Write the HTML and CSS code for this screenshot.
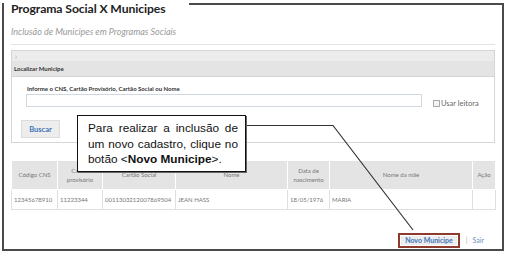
FILE: index.html
```html
<!DOCTYPE html>
<html lang="pt-BR">
<head>
  <meta charset="UTF-8" />
  <title>Programa Social X Municipes</title>
  <link rel="stylesheet" href="styles.css">
</head>
<body>

  <div class="frame">
    <h1 class="page-title">Programa Social X Municipes</h1>
    <p class="subtitle">Inclusão de Municipes em Programas Sociais</p>
    <hr class="divider">

    <div class="panel">
      <div class="panel-toggle">›</div>
      <div class="panel-head">Localizar Municipe</div>
      <div class="panel-body">
        <label class="field-label" for="busca">Informe o CNS, Cartão Provisório, Cartão Social ou Nome</label>
        <div class="search-row">
          <input type="text" id="busca" class="search-input" />
          <label class="reader"><span class="check"></span>Usar leitora</label>
        </div>
        <button class="btn btn-search">Buscar</button>
      </div>
    </div>

    <table class="results">
      <colgroup>
        <col style="width:46px"><col style="width:45px"><col style="width:73px"><col style="width:112px">
        <col style="width:42px"><col style="width:143px"><col style="width:23px">
      </colgroup>
      <thead>
        <tr>
          <th>Código CNS</th>
          <th>Cartão provisório</th>
          <th>Cartão Social</th>
          <th>Nome</th>
          <th>Data de nascimento</th>
          <th>Nome da mãe</th>
          <th>Ação</th>
        </tr>
      </thead>
      <tbody>
        <tr>
          <td>12345678910</td>
          <td>11223344</td>
          <td>0011303212007869504</td>
          <td>JEAN HASS</td>
          <td>18/05/1976</td>
          <td>MARIA</td>
          <td></td>
        </tr>
      </tbody>
    </table>

    <div class="actions">
      <span class="highlight"><button class="btn btn-new">Novo Municipe</button></span>
      <span class="sep">|</span>
      <a class="link-exit">Sair</a>
    </div>
  </div>

  <!-- annotation -->
  <svg class="callout-line" width="509" height="256" viewBox="0 0 509 256">
    <polyline points="246,125.5 333,125.5 413,230" fill="none" stroke="#333" stroke-width="1.2" />
  </svg>
  <div class="callout">
    Para realizar a inclusão de um novo cadastro, clique no botão &lt;<strong>Novo Municipe</strong>&gt;.
  </div>

</body>
</html>
```

FILE: styles.css
```css
* {
  box-sizing: border-box;
}

body {
  margin: 0;
  width: 509px;
  height: 256px;
  overflow: hidden;
  position: relative;
  background: #fff;
  font-family: Lato, "Open Sans", sans-serif;
  color: #333;
}

.frame {
  margin: 3px 0 0 2px;
  width: 502px;
  height: 248px;
  border: 2px solid #4a4a4a;
  padding: 0 7px;
}

.page-title {
  margin: -5px 0 0 -7px;
  width: fit-content;
  padding: 0 24px 0 7px;
  background: #fff;
  font-size: 12.2px;
  line-height: 17px;
  font-weight: 700;
  letter-spacing: -0.1px;
  color: #222;
}

.subtitle {
  margin: 8px 0 0;
  font-size: 9px;
  line-height: 13px;
  font-style: italic;
  color: #9a9a9a;
}

.divider {
  margin: 6px 0 5px;
  border: 0;
  border-top: 1px solid #e3e3e3;
}

.panel {
  border: 1px solid #d6d6d6;
}

.panel-toggle {
  height: 10px;
  padding-left: 3px;
  background: #ececec;
  font-size: 7px;
  line-height: 10px;
  color: #999;
}

.panel-head {
  height: 16px;
  padding-left: 2px;
  background: #e4e4e4;
  border-bottom: 1px solid #d6d6d6;
  font-size: 6px;
  line-height: 16px;
  font-weight: 700;
  color: #333;
}

.panel-body {
  padding: 7px 0 4px 9px;
}

.field-label {
  display: block;
  margin-left: 6px;
  font-size: 6px;
  line-height: 9px;
  font-weight: 700;
  color: #333;
}

.search-row {
  display: flex;
  align-items: flex-end;
  margin: 1px 0 0 5px;
}

.search-input {
  width: 396px;
  height: 13px;
  border: 1px solid #cfd8e0;
  font-size: 7px;
  padding: 0 2px;
}

.reader {
  display: flex;
  align-items: center;
  margin: 0 0 -1px 11px;
  font-size: 7.5px;
  color: #666;
}

.check {
  width: 7px;
  height: 7px;
  border: 1px solid #aaa;
  background: #f3f3f3;
  margin-right: 1px;
}

.btn {
  border: 1px solid #dcdcdc;
  background: #ededed;
  color: #3d74b8;
  font-family: Lato, "Open Sans", sans-serif;
  font-weight: 700;
  cursor: pointer;
}

.btn-search {
  margin-top: 13px;
  width: 39px;
  height: 18px;
  padding: 0;
  font-size: 7.5px;
}

.results {
  margin-top: 18px;
  width: 484px;
  table-layout: fixed;
  border-collapse: collapse;
  font-size: 6px;
}

.results th {
  height: 28px;
  background: #e4e4e4;
  border: 1px solid #fff;
  border-top: 0;
  font-weight: 400;
  color: #777;
  text-align: center;
  line-height: 9px;
  padding: 0 2px;
}

.results td {
  height: 20px;
  border: 1px solid #e0e0e0;
  color: #777;
  padding: 0 2px;
  white-space: nowrap;
  overflow: hidden;
}

.actions {
  display: flex;
  justify-content: flex-end;
  align-items: center;
  margin-top: 23px;
  padding-right: 11px;
  font-size: 7px;
}

.highlight {
  display: flex;
  border: 2px solid #8e3a2c;
}

.btn-new {
  height: 11px;
  padding: 0 4px;
  font-size: 7px;
  line-height: 9px;
  border-color: #fff;
}

.sep {
  margin: 0 5px 0 6px;
  color: #aaa;
}

.link-exit {
  color: #6d8fbd;
}

.callout-line {
  position: absolute;
  left: 0;
  top: 0;
  pointer-events: none;
}

.callout {
  position: absolute;
  left: 77px;
  top: 115px;
  width: 169px;
  height: 57px;
  padding: 5px 7px 0 10px;
  background: #fff;
  border: 1px solid #111;
  box-shadow: 1px 1px 0 #666;
  font-family: "Liberation Sans", Arial, sans-serif;
  font-size: 11.8px;
  line-height: 15.5px;
  text-align: justify;
  color: #111;
}
```
